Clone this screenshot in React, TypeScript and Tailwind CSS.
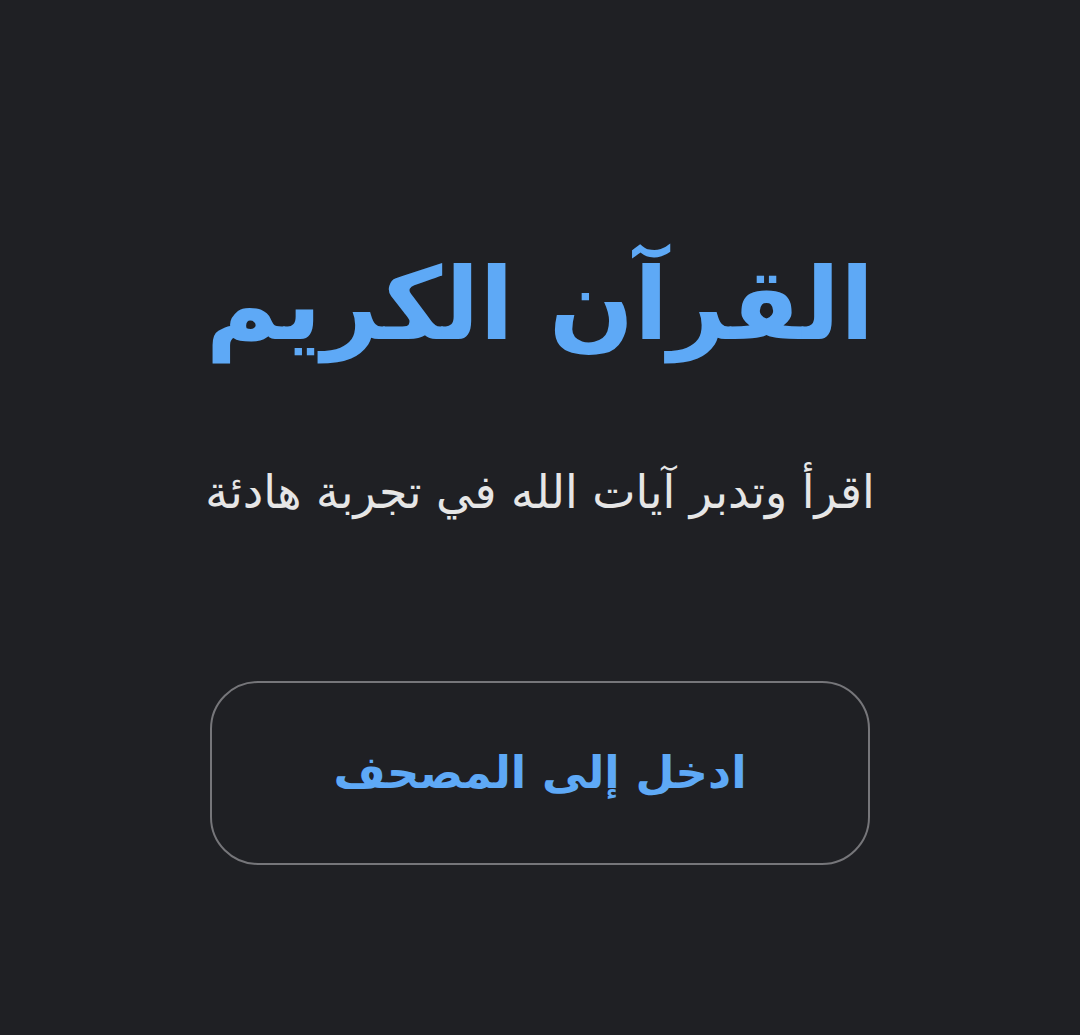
export default function App() {
  return (
    <div
      dir="rtl"
      className="min-h-[1035px] w-full bg-[#1f2024] flex flex-col items-center pt-[225px]"
      style={{ fontFamily: '"DejaVu Sans", "Noto Sans", sans-serif' }}
    >
      <h1 className="text-[#5ea9f6] text-[100px] font-bold leading-[160px]">
        القرآن الكريم
      </h1>
      <p className="mt-[75px] text-[#e6e6e6] text-[46px] leading-[64px]">
        اقرأ وتدبر آيات الله في تجربة هادئة
      </p>
      <button className="mt-[157px] w-[660px] h-[184px] rounded-[48px] border-2 border-[#76767a] flex items-center justify-center text-[#5ea9f6] text-[45px] font-bold">
        ادخل إلى المصحف
      </button>
    </div>
  );
}
